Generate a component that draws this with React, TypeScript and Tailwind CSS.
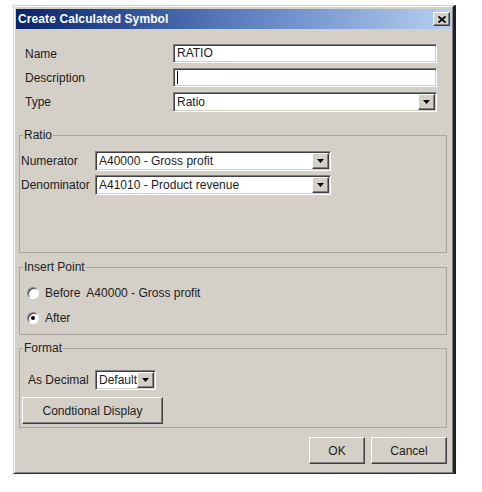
import { ReactNode } from 'react';

const sunken =
  'border border-t-[#808080] border-l-[#808080] border-r-white border-b-white shadow-[inset_1px_1px_0_#404040,inset_-1px_-1px_0_#d4d0c8] bg-white';
const raised =
  'bg-[#d4d0c8] border border-t-white border-l-white border-r-[#404040] border-b-[#404040] shadow-[inset_-1px_-1px_0_#808080]';

function Arrow() {
  return (
    <div className={`w-[17px] h-full flex items-center justify-center shrink-0 ${raised}`}>
      <svg width="7" height="4" viewBox="0 0 7 4">
        <polygon points="0,0 7,0 3.5,4" fill="#000" />
      </svg>
    </div>
  );
}

function Combo({ text, className }: { text: string; className: string }) {
  return (
    <div className={`${sunken} ${className} flex p-[1px]`}>
      <div className="flex-1 min-w-0 overflow-hidden whitespace-nowrap pl-[2px] leading-[16px]">{text}</div>
      <Arrow />
    </div>
  );
}

function Group({ title, className, children }: { title: string; className: string; children: ReactNode }) {
  return (
    <fieldset className={`ml-[3px] w-[428px] border border-[#a8a69f] ${className}`}>
      <legend className="ml-[3px] px-[1px] leading-[14px] text-[#222]">{title}</legend>
      {children}
    </fieldset>
  );
}

function Radio({ checked, label }: { checked?: boolean; label: string }) {
  return (
    <div className="flex items-center h-[20px] pl-[7px]">
      <div className="w-[12px] h-[12px] rounded-full bg-white border border-t-[#808080] border-l-[#808080] border-r-white border-b-white shadow-[inset_1px_1px_0_#404040] flex items-center justify-center">
        {checked && <div className="w-[4px] h-[4px] rounded-full bg-black" />}
      </div>
      <span className="ml-[6px] whitespace-pre">{label}</span>
    </div>
  );
}

export default function App() {
  return (
    <div
      className="w-[482px] h-[492px] bg-white pt-[5px] pl-[13px] text-[12px] text-[#1c1c1c]"
      style={{ fontFamily: '"Liberation Sans", Arial, sans-serif' }}
    >
      <div className="w-[443px] h-[469px] bg-[#d4d0c8] border border-t-[#d4d0c8] border-l-[#d4d0c8] border-r-[#202020] border-b-[#303030] border-r-[3px] shadow-[inset_1px_1px_0_#fff,inset_-1px_-1px_0_#808080] pt-[3px] pl-[2px] pr-[1px]">
        {/* title bar */}
        <div className="h-[20px] flex items-center justify-between bg-gradient-to-r from-[#0a246a] via-[#5a7cc0] to-[#b6d0ee]">
          <span className="pl-[2px] text-white font-bold text-[12px] tracking-[0.1px]">Create Calculated Symbol</span>
          <div className={`w-[17px] h-[14px] mr-[2px] flex items-center justify-center ${raised}`}>
            <svg width="8" height="7" viewBox="0 0 8 7">
              <path d="M0.5 0.5 L7.5 6.5 M7.5 0.5 L0.5 6.5" stroke="#000" strokeWidth="1.8" />
            </svg>
          </div>
        </div>

        {/* name / description / type */}
        <div className="mt-[15px] pl-[9px] grid grid-cols-[148px_264px] gap-y-[5px] items-center">
          <span>Name</span>
          <div className={`${sunken} h-[19px] pl-[3px] leading-[17px]`}>RATIO</div>
          <span>Description</span>
          <div className={`${sunken} h-[19px] pl-[3px] flex items-center`}>
            <div className="w-[1px] h-[13px] bg-black" />
          </div>
          <span>Type</span>
          <Combo text="Ratio" className="h-[20px]" />
        </div>

        <Group title="Ratio" className="mt-[16px] pb-[57px]">
          <div className="pt-[9px] pl-[1px] flex flex-col gap-[4px]">
            <div className="flex items-center">
              <span className="w-[74px]">Numerator</span>
              <Combo text="A40000 - Gross profit" className="w-[236px] h-[20px]" />
            </div>
            <div className="flex items-center">
              <span className="w-[74px]">Denominator</span>
              <Combo text="A41010 - Product revenue" className="w-[236px] h-[20px]" />
            </div>
          </div>
        </Group>

        <Group title="Insert Point" className="mt-[7px] pb-[6px]">
          <div className="pt-[9px] flex flex-col gap-[5px]">
            <Radio label="Before  A40000 - Gross profit" />
            <Radio checked label="After" />
          </div>
        </Group>

        <Group title="Format" className="mt-[6px] pb-[3px]">
          <div className="pt-[15px] pl-[8px] flex items-center">
            <span className="w-[67px]">As Decimal</span>
            <Combo text="Default" className="w-[61px] h-[20px]" />
          </div>
          <div className={`mt-[7px] ml-[2px] w-[141px] h-[27px] flex items-center justify-center ${raised}`}>
            Condtional Display
          </div>
        </Group>

        <div className="mt-[9px] flex justify-end gap-[6px] pr-[5px]">
          <div className={`w-[56px] h-[27px] flex items-center justify-center ${raised}`}>OK</div>
          <div className={`w-[76px] h-[27px] flex items-center justify-center ${raised}`}>Cancel</div>
        </div>
      </div>
    </div>
  );
}
